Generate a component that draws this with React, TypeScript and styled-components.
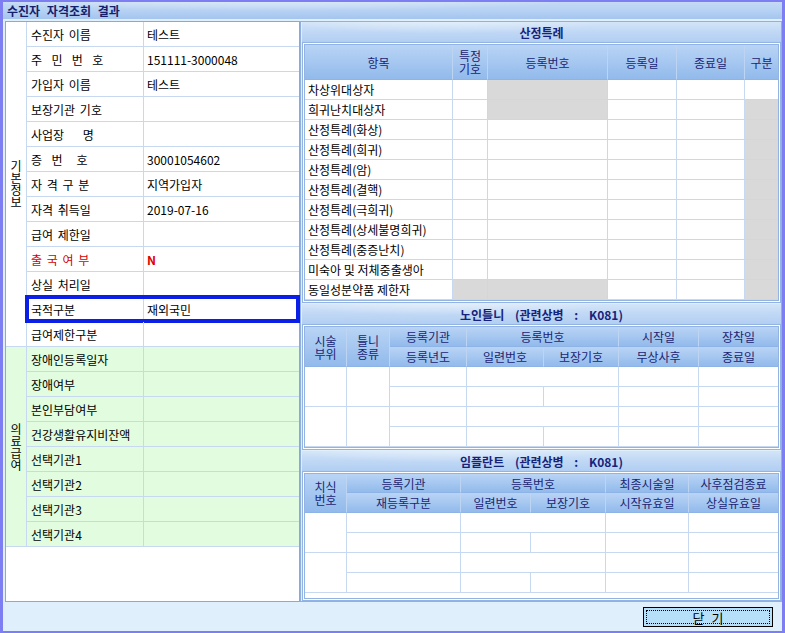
import React from 'react';
import styled, { createGlobalStyle, css } from 'styled-components';

const GlobalStyle = createGlobalStyle`
  html, body { margin: 0; padding: 0; }
  body {
    font-family: "Noto Sans CJK KR", "Liberation Sans", sans-serif;
    font-size: 12px;
    color: #000;
  }
`;

const LINE = '#c6d9f0';

const Window = styled.div`
  width: 785px;
  height: 633px;
  box-sizing: border-box;
  background: #7d7ef1;
  padding: 2px 3px;
  display: flex;
  flex-direction: column;
`;

const TitleBar = styled.div`
  height: 17px;
  flex: none;
  padding-left: 4px;
  display: flex;
  align-items: center;
  font-weight: 700;
  font-size: 12px;
  color: #15206c;
  word-spacing: 4px;
  background:
    radial-gradient(ellipse 60% 120% at 35% -30%, rgba(255, 255, 255, 0.55), rgba(255, 255, 255, 0) 70%),
    linear-gradient(180deg, #c4daf5 0%, #b4d0f3 55%, #a5c5ef 100%);
`;

const Body = styled.div`
  flex: 1;
  display: flex;
  flex-direction: column;
  background: #dff0fc;
  padding: 2px 0 0 2px;
`;

const Panels = styled.div`
  height: 581px;
  flex: none;
  display: flex;
`;

/* ---------- left panel ---------- */

const LeftPanel = styled.div`
  width: 295px;
  flex: none;
  box-sizing: border-box;
  border: 1px solid #88a9dd;
  background: #fff;
  display: flex;
  flex-direction: column;
`;

const Group = styled.div<{ $green?: boolean }>`
  display: flex;
  border-bottom: 1px solid ${LINE};
  background: ${(p) => (p.$green ? '#e1fcde' : '#fff')};
`;

const GroupLabel = styled.div`
  width: 21px;
  flex: none;
  box-sizing: border-box;
  border-right: 1px solid ${LINE};
  display: flex;
  align-items: center;
  justify-content: center;
`;

const VText = styled.span`
  width: 12px;
  word-break: break-all;
  line-height: 12px;
  text-align: center;
`;

const Rows = styled.div`
  flex: 1;
  display: flex;
  flex-direction: column;
`;

const Row = styled.div<{ $highlight?: boolean }>`
  position: relative;
  display: grid;
  grid-template-columns: 117px 1fr;
  height: 25px;
  box-sizing: border-box;
  border-bottom: 1px solid ${LINE};
  &:last-child {
    border-bottom: none;
    height: 24px;
  }
  ${(p) =>
    p.$highlight &&
    css`
      &::after {
        content: '';
        position: absolute;
        top: -2px;
        left: -2px;
        right: -1px;
        bottom: -2px;
        border: 4px solid #0b1fe6;
        pointer-events: none;
      }
    `}
`;

const LabelCell = styled.div<{ $red?: boolean }>`
  border-right: 1px solid ${LINE};
  padding-left: 4px;
  display: flex;
  align-items: center;
  white-space: pre;
  word-spacing: 2px;
  color: ${(p) => (p.$red ? '#d40000' : '#000')};
`;

const ValueCell = styled.div<{ $red?: boolean }>`
  padding-left: 3px;
  display: flex;
  align-items: center;
  white-space: pre;
  color: ${(p) => (p.$red ? '#e00000' : '#000')};
  font-weight: ${(p) => (p.$red ? 700 : 400)};
`;

/* ---------- right panel ---------- */

const RightPanel = styled.div`
  flex: 1;
  box-sizing: border-box;
  border: 1px solid #8fb0e0;
  padding-left: 1px;
  background: #dff0fc;
  display: flex;
  flex-direction: column;
  gap: 1px;
`;

const Section = styled.div<{ $grow?: boolean }>`
  display: flex;
  flex-direction: column;
  flex: ${(p) => (p.$grow ? '1' : 'none')};
`;

const SectionTitle = styled.div`
  height: 20px;
  flex: none;
  display: flex;
  align-items: center;
  justify-content: center;
  font-weight: 700;
  color: #17237a;
  word-spacing: 8px;
  background:
    radial-gradient(ellipse 55% 140% at 30% -40%, rgba(255, 255, 255, 0.6), rgba(255, 255, 255, 0) 70%),
    linear-gradient(180deg, #d2e4f8 0%, #c0d8f5 50%, #b1cef2 100%);
`;

const Frame = styled.div<{ $grow?: boolean }>`
  border: 3px double #93b4e2;
  background: #fff;
  flex: ${(p) => (p.$grow ? '1' : 'none')};
`;

const Table = styled.table`
  width: 100%;
  table-layout: fixed;
  border-collapse: separate;
  border-spacing: 0;
  font-size: 12px;
`;

const Th = styled.th<{ $h?: number }>`
  height: ${(p) => p.$h ?? 20}px;
  box-sizing: border-box;
  padding: 0;
  font-weight: 400;
  color: #1b2572;
  line-height: 13px;
  text-align: center;
  white-space: nowrap;
  background: linear-gradient(180deg, #b9d4f5 0%, #a4c6f0 55%, #92baeb 100%);
  border-right: 1px solid #bdd5f3;
  border-bottom: 1px solid #8db3e7;
  &:last-child {
    border-right: none;
  }
`;

const Td = styled.td<{ $gray?: boolean }>`
  height: 20px;
  box-sizing: border-box;
  padding: 0 0 0 3px;
  white-space: nowrap;
  overflow: hidden;
  background: ${(p) => (p.$gray ? '#d9d9d9' : '#fff')};
  border-right: 1px solid ${LINE};
  border-bottom: 1px solid ${LINE};
  &:last-child {
    border-right: none;
  }
`;

/* ---------- footer ---------- */

const Footer = styled.div`
  flex: 1;
  display: flex;
  align-items: center;
  justify-content: flex-end;
  padding-right: 9px;
`;

const CloseButton = styled.button`
  position: relative;
  width: 130px;
  height: 20px;
  box-sizing: border-box;
  border: 1px solid #000;
  background: #b6e0f9;
  font-family: "Noto Sans CJK KR", "Liberation Sans", sans-serif;
  font-size: 13px;
  word-spacing: 4px;
  padding: 0;
  color: #000;
  &::before {
    content: '';
    position: absolute;
    inset: 2px;
    border: 1px dotted #000;
  }
`;

/* ---------- data ---------- */

type Item = { label: string; value?: string; red?: boolean; highlight?: boolean };

const basic: Item[] = [
  { label: '수진자 이름', value: '테스트' },
  { label: '주  민  번  호', value: '151111-3000048' },
  { label: '가입자 이름', value: '테스트' },
  { label: '보장기관 기호' },
  { label: '사업장    명' },
  { label: '증  번   호', value: '30001054602' },
  { label: '자 격 구 분', value: '지역가입자' },
  { label: '자격 취득일', value: '2019-07-16' },
  { label: '급여 제한일' },
  { label: '출 국 여 부', value: 'N', red: true },
  { label: '상실 처리일' },
  { label: '국적구분', value: '재외국민', highlight: true },
  { label: '급여제한구분' },
];

const medical: Item[] = [
  { label: '장애인등록일자' },
  { label: '장애여부' },
  { label: '본인부담여부' },
  { label: '건강생활유지비잔액' },
  { label: '선택기관1' },
  { label: '선택기관2' },
  { label: '선택기관3' },
  { label: '선택기관4' },
];

const special: { name: string; gray: number[] }[] = [
  { name: '차상위대상자', gray: [2] },
  { name: '희귀난치대상자', gray: [2, 5] },
  { name: '산정특례(화상)', gray: [5] },
  { name: '산정특례(희귀)', gray: [5] },
  { name: '산정특례(암)', gray: [5] },
  { name: '산정특례(결핵)', gray: [5] },
  { name: '산정특례(극희귀)', gray: [5] },
  { name: '산정특례(상세불명희귀)', gray: [5] },
  { name: '산정특례(중증난치)', gray: [5] },
  { name: '미숙아 및 저체중출생아', gray: [5] },
  { name: '동일성분약품 제한자', gray: [1, 2, 5] },
];

const InfoGroup = ({ title, items, green }: { title: string; items: Item[]; green?: boolean }) => (
  <Group $green={green}>
    <GroupLabel>
      <VText>{title}</VText>
    </GroupLabel>
    <Rows>
      {items.map((it) => (
        <Row key={it.label} $highlight={it.highlight}>
          <LabelCell $red={it.red}>{it.label}</LabelCell>
          <ValueCell $red={it.red}>{it.value ?? ''}</ValueCell>
        </Row>
      ))}
    </Rows>
  </Group>
);

const SpecialTable = () => (
  <Table>
    <colgroup>
      <col style={{ width: 148 }} />
      <col style={{ width: 35 }} />
      <col style={{ width: 120 }} />
      <col style={{ width: 69 }} />
      <col style={{ width: 68 }} />
      <col />
    </colgroup>
    <thead>
      <tr>
        <Th $h={35}>항목</Th>
        <Th $h={35}>
          특정
          <br />
          기호
        </Th>
        <Th $h={35}>등록번호</Th>
        <Th $h={35}>등록일</Th>
        <Th $h={35}>종료일</Th>
        <Th $h={35}>구분</Th>
      </tr>
    </thead>
    <tbody>
      {special.map((r) => (
        <tr key={r.name}>
          {[0, 1, 2, 3, 4, 5].map((i) => (
            <Td key={i} $gray={r.gray.includes(i)}>
              {i === 0 ? r.name : ''}
            </Td>
          ))}
        </tr>
      ))}
    </tbody>
  </Table>
);

const PairRows = () => (
  <>
    <tr>
      <Td rowSpan={2} />
      <Td rowSpan={2} />
      <Td />
      <Td colSpan={2} />
      <Td />
      <Td />
    </tr>
    <tr>
      <Td />
      <Td />
      <Td />
      <Td />
      <Td />
    </tr>
  </>
);

const PairRowsImplant = () => (
  <>
    <tr>
      <Td rowSpan={2} />
      <Td />
      <Td colSpan={2} />
      <Td />
      <Td />
    </tr>
    <tr>
      <Td />
      <Td />
      <Td />
      <Td />
      <Td />
    </tr>
  </>
);

const DentureTable = () => (
  <Table>
    <colgroup>
      <col style={{ width: 42 }} />
      <col style={{ width: 43 }} />
      <col style={{ width: 77 }} />
      <col style={{ width: 77 }} />
      <col style={{ width: 75 }} />
      <col style={{ width: 80 }} />
      <col />
    </colgroup>
    <thead>
      <tr>
        <Th rowSpan={2} $h={40}>
          시술
          <br />
          부위
        </Th>
        <Th rowSpan={2} $h={40}>
          틀니
          <br />
          종류
        </Th>
        <Th>등록기관</Th>
        <Th colSpan={2}>등록번호</Th>
        <Th>시작일</Th>
        <Th>장착일</Th>
      </tr>
      <tr>
        <Th>등록년도</Th>
        <Th>일련번호</Th>
        <Th>보장기호</Th>
        <Th>무상사후</Th>
        <Th>종료일</Th>
      </tr>
    </thead>
    <tbody>
      <PairRows />
      <PairRows />
    </tbody>
  </Table>
);

const ImplantTable = () => (
  <Table>
    <colgroup>
      <col style={{ width: 42 }} />
      <col style={{ width: 114 }} />
      <col style={{ width: 70 }} />
      <col style={{ width: 75 }} />
      <col style={{ width: 83 }} />
      <col />
    </colgroup>
    <thead>
      <tr>
        <Th rowSpan={2} $h={39}>
          치식
          <br />
          번호
        </Th>
        <Th $h={19}>등록기관</Th>
        <Th $h={19} colSpan={2}>
          등록번호
        </Th>
        <Th $h={19}>최종시술일</Th>
        <Th $h={19}>사후점검종료</Th>
      </tr>
      <tr>
        <Th>재등록구분</Th>
        <Th>일련번호</Th>
        <Th>보장기호</Th>
        <Th>시작유효일</Th>
        <Th>상실유효일</Th>
      </tr>
    </thead>
    <tbody>
      <PairRowsImplant />
      <PairRowsImplant />
    </tbody>
  </Table>
);

export default function App() {
  return (
    <>
      <GlobalStyle />
      <Window>
        <TitleBar>수진자 자격조회 결과</TitleBar>
        <Body>
          <Panels>
            <LeftPanel>
              <InfoGroup title="기본정보" items={basic} />
              <InfoGroup title="의료급여" items={medical} green />
            </LeftPanel>
            <RightPanel>
              <Section>
                <SectionTitle>산정특례</SectionTitle>
                <Frame>
                  <SpecialTable />
                </Frame>
              </Section>
              <Section>
                <SectionTitle>노인틀니 (관련상병 : K081)</SectionTitle>
                <Frame>
                  <DentureTable />
                </Frame>
              </Section>
              <Section $grow>
                <SectionTitle>임플란트 (관련상병 : K081)</SectionTitle>
                <Frame $grow>
                  <ImplantTable />
                </Frame>
              </Section>
            </RightPanel>
          </Panels>
          <Footer>
            <CloseButton type="button">닫 기</CloseButton>
          </Footer>
        </Body>
      </Window>
    </>
  );
}
